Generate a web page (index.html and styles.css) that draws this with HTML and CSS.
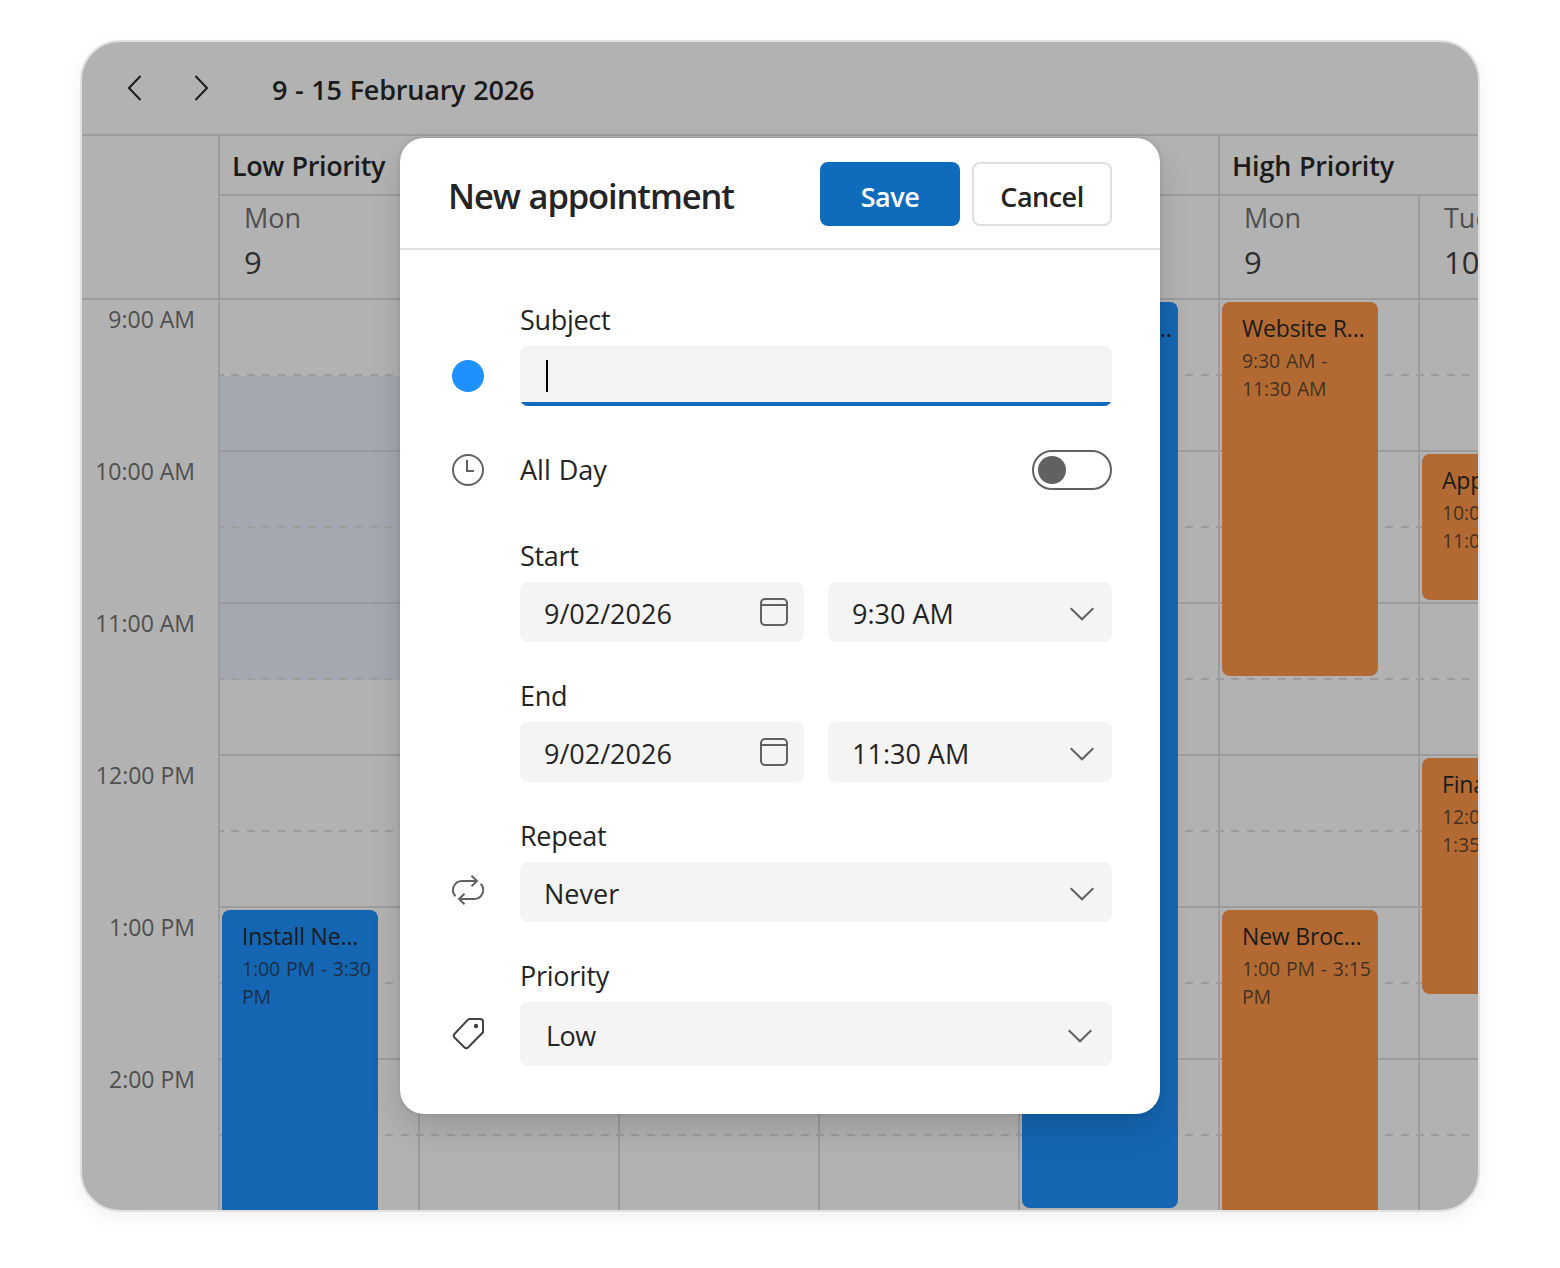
FILE: index.html
```html
<!DOCTYPE html>
<html lang="en">

<head>
    <meta charset="UTF-8">
    <meta name="viewport" content="width=device-width, initial-scale=1.0">
    <title>Scheduler - New appointment</title>
    <link rel="stylesheet" href="styles.css">
</head>

<body>
    <div class="calendar">
        <div class="toolbar">
            <button class="nav-btn" aria-label="Previous week">
                <svg width="28" height="28" viewBox="0 0 28 28"><path d="M20.500 2 9 14l11.500 12" /></svg>
            </button>
            <button class="nav-btn" aria-label="Next week">
                <svg width="28" height="28" viewBox="0 0 28 28"><path d="M7.500 2 19 14 7.500 26" /></svg>
            </button>
            <span class="date-range">9 - 15 February 2026</span>
        </div>

        <div class="schedule">
            <div class="corner"></div>
            <div class="group-header group-low">Low Priority</div>
            <div class="group-header group-high">High Priority</div>

            <div class="day-header"><span class="day-name">Mon</span><span class="day-number">9</span></div>
            <div class="day-header"></div>
            <div class="day-header"></div>
            <div class="day-header"></div>
            <div class="day-header"></div>
            <div class="day-header"><span class="day-name">Mon</span><span class="day-number">9</span></div>
            <div class="day-header"><span class="day-name">Tue</span><span class="day-number">10</span></div>

            <div class="time-column">
                <span>9:00 AM</span>
                <span>10:00 AM</span>
                <span>11:00 AM</span>
                <span>12:00 PM</span>
                <span>1:00 PM</span>
                <span>2:00 PM</span>
            </div>
            <div class="day-column">
                <div class="selection"></div>
                <div class="event event-low from-1300">
                    <div class="event-title">Install Ne…</div>
                    <div class="event-time">1:00 PM - 3:30 PM</div>
                </div>
            </div>
            <div class="day-column"></div>
            <div class="day-column"></div>
            <div class="day-column"></div>
            <div class="day-column">
                <div class="event event-low full-day">
                    <div class="event-title">Approve N…</div>
                </div>
            </div>
            <div class="day-column">
                <div class="event event-high morning">
                    <div class="event-title">Website R…</div>
                    <div class="event-time">9:30 AM - 11:30 AM</div>
                </div>
                <div class="event event-high from-1300">
                    <div class="event-title">New Broc…</div>
                    <div class="event-time">1:00 PM - 3:15 PM</div>
                </div>
            </div>
            <div class="day-column">
                <div class="event event-high one-hour">
                    <div class="event-title">App…</div>
                    <div class="event-time">10:00 AM - 11:00 AM</div>
                </div>
                <div class="event event-high noon">
                    <div class="event-title">Final…</div>
                    <div class="event-time">12:00 PM - 1:35 PM</div>
                </div>
            </div>
        </div>
    </div>

    <div class="dialog">
        <div class="dialog-header">
            <h2>New appointment</h2>
            <button class="btn btn-primary">Save</button>
            <button class="btn btn-default">Cancel</button>
        </div>

        <div class="dialog-body">
            <div class="form-row">
                <div class="row-icon"><span class="color-dot"></span></div>
                <div class="form-group">
                    <label>Subject</label>
                    <div class="input input-focused"><span class="caret"></span></div>
                </div>
            </div>

            <div class="form-row all-day">
                <div class="row-icon">
                    <svg width="32" height="32" viewBox="0 0 32 32"><circle cx="16" cy="16" r="15" /><path d="M15 6v11h7" /></svg>
                </div>
                <span class="all-day-label">All Day</span>
                <span class="switch"></span>
            </div>

            <div class="form-row">
                <div class="row-icon"></div>
                <div class="form-group">
                    <label>Start</label>
                    <div class="field-pair">
                        <div class="input input-date">
                            <span>9/02/2026</span>
                            <svg width="28" height="28" viewBox="0 0 28 28"><rect x="1" y="1" width="26" height="26" rx="4" /><path d="M1 7h26" /></svg>
                        </div>
                        <div class="input">
                            <span>9:30 AM</span>
                            <svg class="chevron" width="24" height="14" viewBox="0 0 24 14"><path d="M.7 1.200 12 12.300 23.300 1.200" /></svg>
                        </div>
                    </div>
                </div>
            </div>

            <div class="form-row">
                <div class="row-icon"></div>
                <div class="form-group">
                    <label>End</label>
                    <div class="field-pair">
                        <div class="input input-date">
                            <span>9/02/2026</span>
                            <svg width="28" height="28" viewBox="0 0 28 28"><rect x="1" y="1" width="26" height="26" rx="4" /><path d="M1 7h26" /></svg>
                        </div>
                        <div class="input">
                            <span>11:30 AM</span>
                            <svg class="chevron" width="24" height="14" viewBox="0 0 24 14"><path d="M.7 1.200 12 12.300 23.300 1.200" /></svg>
                        </div>
                    </div>
                </div>
            </div>

            <div class="form-row">
                <div class="row-icon">
                    <svg class="repeat" width="32" height="32" viewBox="0 0 32 32">
                        <path d="M3.500 22.200A9 9 0 0 1 10 7h15M19.500 1.700 25 7l-5.500 5.300M28.700 9.800A9 9 0 0 1 22 25H7M12.500 19.700 7 25l5.500 5.300" />
                    </svg>
                </div>
                <div class="form-group">
                    <label>Repeat</label>
                    <div class="input">
                        <span>Never</span>
                        <svg class="chevron" width="24" height="14" viewBox="0 0 24 14"><path d="M.7 1.200 12 12.300 23.300 1.200" /></svg>
                    </div>
                </div>
            </div>

            <div class="form-row">
                <div class="row-icon">
                    <svg class="tag" width="32" height="32" viewBox="0 0 32 32">
                        <path d="M17.200 1H28.500Q31 1 31 3.500V14.300L16.300 29.300Q14.300 31.200 12.300 29.300L2.700 19.700Q.8 17.700 2.700 15.700L16 1.700Q16.600 1 17.500 1Z" />
                        <circle class="tag-hole" cx="24" cy="8" r="2.200" />
                    </svg>
                </div>
                <div class="form-group">
                    <label>Priority</label>
                    <div class="input input-tall">
                        <span>Low</span>
                        <svg class="chevron" width="24" height="14" viewBox="0 0 24 14"><path d="M.7 1.200 12 12.300 23.300 1.200" /></svg>
                    </div>
                </div>
            </div>
        </div>
    </div>
</body>

</html>
```
FILE: styles.css
```css
* {
    margin: 0;
    padding: 0;
    box-sizing: border-box;
}

body {
    width: 1560px;
    height: 1268px;
    padding: 40px 80px;
    position: relative;
    overflow: hidden;
    background: #fff;
    color: #242424;
    font-family: "Segoe UI", "Open Sans", "Noto Sans", sans-serif;
    font-size: 27px;
}

svg {
    display: block;
    flex: none;
    fill: none;
    stroke: #616161;
    stroke-width: 2;
}

/* Calendar behind the dialog */

.calendar {
    width: 1400px;
    height: 1172px;
    border: 2px solid #e0e0e0;
    border-radius: 40px;
    background: #b2b2b2;
    color: #1b1b1b;
    box-shadow: 0 6px 20px rgba(0, 0, 0, 0.06);
    overflow: hidden;
}

.toolbar {
    height: 94px;
    padding-left: 38px;
    border-bottom: 2px solid #9c9c9c;
    display: flex;
    align-items: center;
}

.nav-btn {
    width: 28px;
    height: 28px;
    margin-right: 40px;
    border: none;
    background: none;
}

.nav-btn svg {
    stroke: #1b1b1b;
}

.date-range {
    padding: 4px 0 0 16px;
    font-weight: 600;
    line-height: 40px;
    letter-spacing: -0.2px;
    word-spacing: 1px;
}

.schedule {
    display: grid;
    grid-template-columns: 136px repeat(7, 200px);
    grid-template-rows: 60px 104px 912px;
    isolation: isolate;
}

.corner {
    grid-row: span 2;
    border-bottom: 2px solid #9c9c9c;
}

.group-header {
    padding: 10px 12px;
    border-left: 2px solid #9c9c9c;
    border-bottom: 2px solid #9c9c9c;
    font-weight: 600;
    line-height: 40px;
    letter-spacing: -0.4px;
    word-spacing: 1px;
}

.group-low {
    grid-column: span 5;
}

.group-high {
    grid-column: span 2;
    letter-spacing: -0.2px;
}

.day-header {
    display: flex;
    flex-direction: column;
    padding: 2px 24px;
    border-left: 2px solid #9c9c9c;
    border-bottom: 2px solid #9c9c9c;
}

.day-name {
    color: #4f4f4f;
    line-height: 40px;
}

.day-number {
    color: #2d2d2d;
    font-size: 31px;
    line-height: 48px;
}

.time-column {
    display: grid;
    grid-auto-rows: 152px;
    padding-right: 23px;
    color: #4f4f4f;
    font-size: 23px;
    line-height: 39px;
    text-align: right;
}

/* Half-hour slots of 76px: dashed line, then a solid one on the full hour */
.day-column {
    display: grid;
    grid-template-rows: repeat(12, 76px);
    border-left: 2px solid #9c9c9c;
    background: repeating-linear-gradient(transparent 0 150px, #9c9c9c 150px 152px);
}

.day-column::before {
    content: "";
    grid-area: 1 / 1 / 13 / 2;
    background: repeating-linear-gradient(90deg, #9c9c9c 0 8px, transparent 8px 15.385px) -4px 0 / 240px 100%;
    -webkit-mask: repeating-linear-gradient(transparent 0 74px, #000 74px 76px, transparent 76px 152px);
    mask: repeating-linear-gradient(transparent 0 74px, #000 74px 76px, transparent 76px 152px);
}

.selection {
    grid-area: 2 / 1 / 6 / 2;
    z-index: -1;
    background: #a3a8b1;
}

.event {
    grid-column: 1;
    z-index: 1;
    width: 156px;
    margin: 2px 0 4px 2px;
    padding: 8px 0 8px 20px;
    border-radius: 8px;
    overflow: hidden;
}

.event-low {
    background: #1566b2;
}

.event-high {
    background: #b26a32;
}

.full-day {
    grid-row: 1 / 13;
}

.morning {
    grid-row: 1 / 6;
}

.one-hour {
    grid-row: 3 / 5;
}

.noon {
    grid-row: 7 / 11;
    height: 236px;
}

.from-1300 {
    grid-row: 9 / 13;
    height: 376px;
}

.event-title {
    font-size: 23px;
    line-height: 36px;
    letter-spacing: -0.18px;
    white-space: nowrap;
}

.event-time {
    margin-top: 1px;
    color: rgba(27, 27, 27, 0.75);
    font-size: 19.5px;
    line-height: 28px;
    letter-spacing: -0.15px;
    word-spacing: 1px;
}

/* Dialog */

.dialog {
    position: absolute;
    top: 138px;
    left: 400px;
    width: 760px;
    height: 976px;
    border-radius: 24px;
    background: #fff;
    box-shadow: 0 0 4px rgba(0, 0, 0, 0.12), 0 16px 32px rgba(0, 0, 0, 0.14);
}

.dialog-header {
    height: 112px;
    padding: 2px 48px 0;
    border-bottom: 2px solid #e0e0e0;
    display: flex;
    align-items: center;
    gap: 12px;
}

.dialog-header h2 {
    flex: 1;
    padding-top: 3px;
    font-size: 34.5px;
    font-weight: 600;
    line-height: 48px;
    letter-spacing: -1.12px;
    word-spacing: 1px;
}

.btn {
    width: 140px;
    height: 64px;
    padding-top: 4px;
    border: 2px solid #e0e0e0;
    border-radius: 8px;
    background: #fff;
    color: #242424;
    font-family: inherit;
    font-size: 27px;
    font-weight: 600;
    letter-spacing: -0.5px;
}

.btn-primary {
    border-color: #0f6cbd;
    background: #0f6cbd;
    color: #fff;
}

.dialog-body {
    padding: 50px 48px 48px;
}

.form-row {
    display: flex;
    align-items: flex-end;
    margin-bottom: 34px;
}

.row-icon {
    flex: none;
    width: 72px;
    height: 60px;
    padding-left: 4px;
    display: flex;
    align-items: center;
}

.form-group {
    flex: 1;
}

.form-group label {
    display: block;
    margin-bottom: 6px;
    line-height: 40px;
    letter-spacing: -0.3px;
}

.input {
    height: 60px;
    padding: 3px 18px 0 24px;
    border-radius: 8px;
    background: #f4f4f4;
    display: flex;
    align-items: center;
    justify-content: space-between;
}

.input-date {
    padding-right: 16px;
}

.input-date svg {
    margin-bottom: 3px;
}

.input-tall {
    height: 64px;
    padding: 3px 20px 0 26px;
    letter-spacing: -0.5px;
}

.input-focused {
    padding-top: 0;
    background: linear-gradient(#0f6cbd, #0f6cbd) bottom / 100% 4px no-repeat #f3f3f2;
}

.caret {
    width: 2px;
    height: 32px;
    margin-left: 2px;
    background: #000;
}

.field-pair {
    display: grid;
    grid-template-columns: 1fr 1fr;
    gap: 24px;
}

.color-dot {
    width: 32px;
    height: 32px;
    border-radius: 50%;
    background: #1e90ff;
}

.all-day {
    height: 40px;
    align-items: center;
    margin: 44px 0 46px;
}

.all-day-label {
    flex: 1;
    line-height: 40px;
    word-spacing: 1px;
}

.switch {
    width: 80px;
    height: 40px;
    padding: 4px;
    border: 2px solid #616161;
    border-radius: 20px;
}

.switch::before {
    content: "";
    display: block;
    width: 28px;
    height: 28px;
    border-radius: 50%;
    background: #616161;
}

.repeat,
.tag {
    margin-bottom: 4px;
}

.tag {
    stroke: #424242;
}

.tag-hole {
    fill: #424242;
    stroke: none;
}
```
